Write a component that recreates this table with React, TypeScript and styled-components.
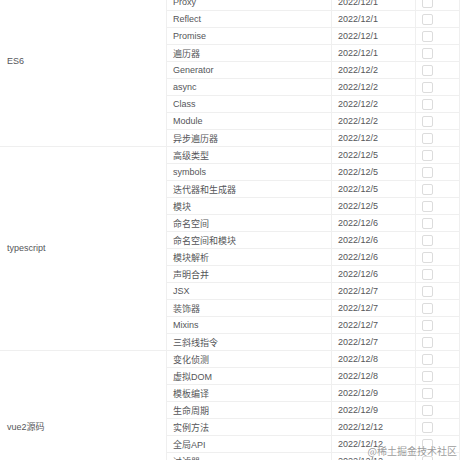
import React from "react";
import styled, { createGlobalStyle } from "styled-components";

const GlobalStyle = createGlobalStyle`
  html, body { margin: 0; padding: 0; background: #fff; }
  body { overflow: hidden; }
`;

const Viewport = styled.div`
  position: relative;
  width: 460px;
  height: 460px;
  overflow: hidden;
  background: #fff;
  font-family: "Liberation Sans", "Noto Sans CJK SC", sans-serif;
  font-size: 9px;
  color: #555659;
`;

const Table = styled.div`
  display: flex;
  flex-direction: column;
  margin-top: -23px;
  width: 460px;
`;

const Group = styled.div`
  display: flex;
`;

const GroupLabel = styled.div`
  box-sizing: border-box;
  width: 167px;
  flex: none;
  display: flex;
  align-items: center;
  padding-left: 7px;
  padding-bottom: 2px;
  border-right: 1px solid #efefef;
  border-bottom: 1px solid #efefef;
`;

const Rows = styled.div`
  display: flex;
  flex-direction: column;
  flex: 1;
`;

const Row = styled.div`
  box-sizing: border-box;
  height: 17px;
  display: grid;
  grid-template-columns: 165px 84px 44px;
  border-bottom: 1px solid #efefef;
`;

const Cell = styled.div`
  box-sizing: border-box;
  display: flex;
  align-items: center;
  padding-left: 6px;
  border-right: 1px solid #efefef;
  white-space: nowrap;
  overflow: hidden;
`;

const Check = styled.span`
  box-sizing: border-box;
  width: 11px;
  height: 11px;
  border: 1px solid #dcdcdc;
  border-radius: 2px;
  background: #fff;
`;

const Watermark = styled.div`
  position: absolute;
  right: 3px;
  bottom: 3px;
  font-family: "Noto Sans CJK SC", sans-serif;
  font-size: 10px;
  line-height: 12px;
  color: rgba(130, 130, 130, 0.8);
  text-shadow: 0 0 1px #fff;
  pointer-events: none;
`;

type Item = [string, string];
type GroupData = { name: string; items: Item[] };

const groups: GroupData[] = [
  {
    name: "ES6",
    items: [
      ["Set和Map", "2022/11/30"],
      ["Proxy", "2022/12/1"],
      ["Reflect", "2022/12/1"],
      ["Promise", "2022/12/1"],
      ["遍历器", "2022/12/1"],
      ["Generator", "2022/12/2"],
      ["async", "2022/12/2"],
      ["Class", "2022/12/2"],
      ["Module", "2022/12/2"],
      ["异步遍历器", "2022/12/2"],
    ],
  },
  {
    name: "typescript",
    items: [
      ["高级类型", "2022/12/5"],
      ["symbols", "2022/12/5"],
      ["迭代器和生成器", "2022/12/5"],
      ["模块", "2022/12/5"],
      ["命名空间", "2022/12/6"],
      ["命名空间和模块", "2022/12/6"],
      ["模块解析", "2022/12/6"],
      ["声明合并", "2022/12/6"],
      ["JSX", "2022/12/7"],
      ["装饰器", "2022/12/7"],
      ["Mixins", "2022/12/7"],
      ["三斜线指令", "2022/12/7"],
    ],
  },
  {
    name: "vue2源码",
    items: [
      ["变化侦测", "2022/12/8"],
      ["虚拟DOM", "2022/12/8"],
      ["模板编译", "2022/12/9"],
      ["生命周期", "2022/12/9"],
      ["实例方法", "2022/12/12"],
      ["全局API", "2022/12/12"],
      ["过滤器", "2022/12/12"],
      ["指令", "2022/12/13"],
      ["内置组件", "2022/12/13"],
    ],
  },
];

export default function App() {
  return (
    <Viewport>
      <GlobalStyle />
      <Table>
        {groups.map((g) => (
          <Group key={g.name}>
            <GroupLabel>{g.name}</GroupLabel>
            <Rows>
              {g.items.map(([title, date]) => (
                <Row key={title}>
                  <Cell>{title}</Cell>
                  <Cell>{date}</Cell>
                  <Cell>
                    <Check />
                  </Cell>
                </Row>
              ))}
            </Rows>
          </Group>
        ))}
      </Table>
      <Watermark>@稀土掘金技术社区</Watermark>
    </Viewport>
  );
}
